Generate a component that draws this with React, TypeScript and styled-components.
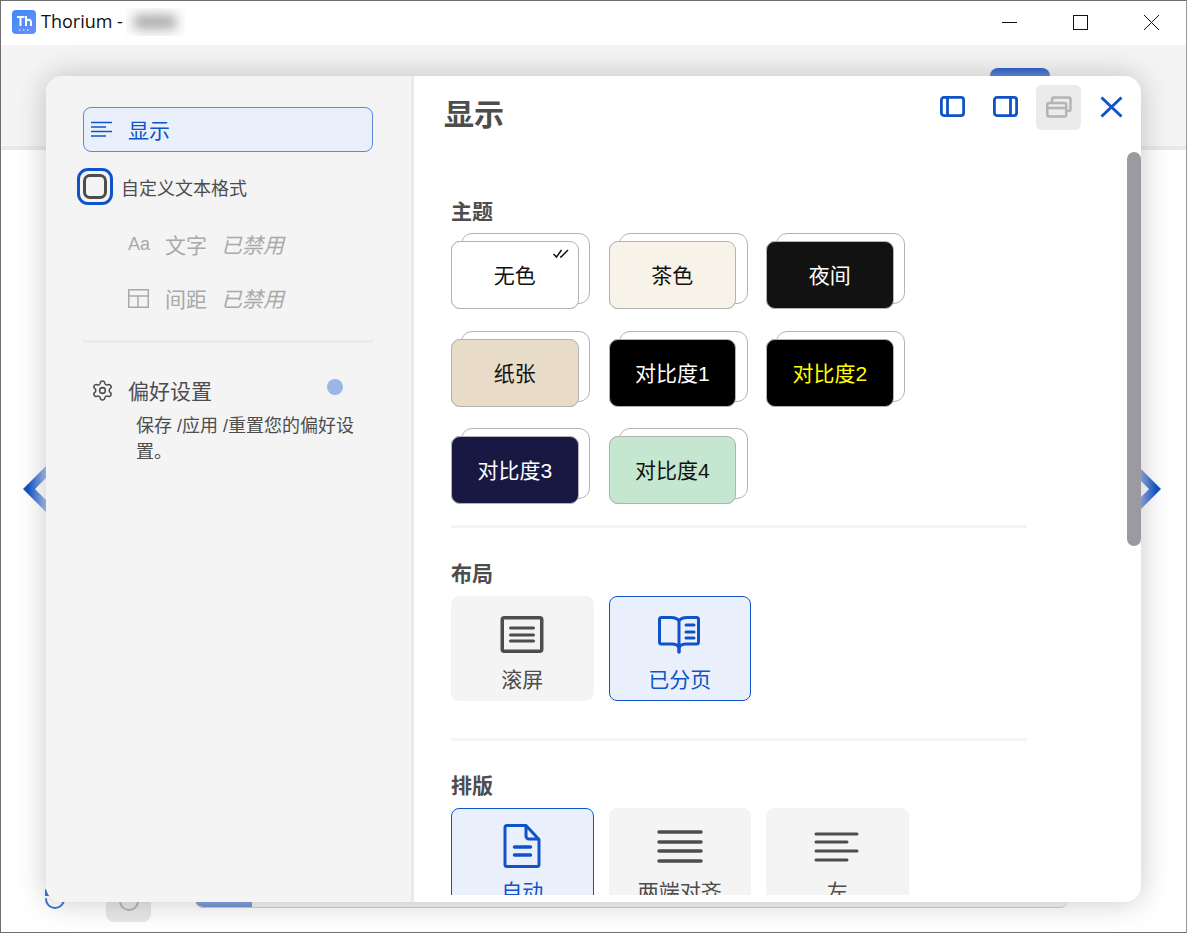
import React from "react";
import styled, { createGlobalStyle } from "styled-components";
import { RotateCcw, Settings } from "lucide-react";

const BLUE = "#1053c8";
const GREY = "#4d4d4d";
const MUTED = "#a9a9a9";
const FONT = '"Liberation Sans", "Noto Sans CJK SC", sans-serif';

const GlobalStyle = createGlobalStyle`
  html, body { margin: 0; padding: 0; background: #fff; }
  * { box-sizing: border-box; }
`;

const Window = styled.div`
  position: relative;
  width: 1187px;
  height: 933px;
  border: 1px solid #6e6e6e;
  border-right-color: #9a9a9a;
  display: flex;
  flex-direction: column;
  overflow: hidden;
  background: #fff;
  font-family: ${FONT};
`;

const TitleBar = styled.div`
  height: 44px;
  flex: none;
  display: flex;
  align-items: center;
  padding: 0 0 2px 11px;
  background: #fff;
`;

const AppIcon = styled.svg`
  width: 24px;
  height: 24px;
  margin-right: 5px;
`;

const TitleText = styled.span`
  margin-top: -2px;
  font-family: "Open Sans", sans-serif;
  font-size: 18px;
  color: #111;
`;

const BlurBox = styled.span`
  width: 59px;
  height: 28px;
  margin-left: 3px;
  display: flex;
  align-items: center;
  justify-content: center;
  background: #fdfdfd;
  overflow: hidden;
`;

const BlurBlob = styled.span`
  width: 42px;
  height: 14px;
  background: #a8a8a8;
  filter: blur(6px);
`;

const WinControls = styled.div`
  margin-left: auto;
  padding-top: 2px;
  display: flex;
  align-items: center;
  height: 100%;
`;

const WinButton = styled.svg`
  width: 71px;
  height: 16px;
`;

const Toolbar = styled.div`
  height: 105px;
  flex: none;
  display: flex;
  justify-content: flex-end;
  padding: 23px 136px 0 0;
  background: #f4f4f4;
  border-bottom: 4px solid #e9e9e9;
`;

const ToolTab = styled.div`
  width: 60px;
  height: 12px;
  border-radius: 8px 8px 0 0;
  background: linear-gradient(#2c64c9, #7f9fdc);
`;

const Reader = styled.div`
  flex: 1;
`;

const Footer = styled.div`
  height: 52px;
  flex: none;
  display: flex;
  align-items: center;
  padding: 0 118px 10px 42px;
`;

const FooterIcon = styled.span`
  width: 24px;
  height: 24px;
  margin-top: -5px;
  color: #3f74d4;
`;

const FooterButton = styled.div`
  width: 45px;
  height: 42px;
  margin-left: 39px;
  border-radius: 8px;
  background: #e8e8e8;
  display: flex;
  align-items: center;
  justify-content: center;
  color: #b5b5b5;
`;

const Progress = styled.div`
  flex: 1;
  height: 14px;
  margin-left: 44px;
  border-radius: 0 0 8px 8px;
  background: #f4f4f4;
  border-bottom: 1px solid #cfcfcf;
  overflow: hidden;
`;

const ProgressFill = styled.div`
  height: 100%;
  border-radius: 0 0 0 8px;
  background: linear-gradient(#a9bfe9, #6f93d8);
`;

const PageArrow = styled.svg<{ $side: "left" | "right" }>`
  position: absolute;
  top: 465px;
  ${({ $side }) => ($side === "left" ? "left: 22px;" : "left: 1137px;")}
  width: 23px;
  height: 46px;
`;

const Modal = styled.div`
  position: absolute;
  left: 45px;
  top: 75px;
  width: 1095px;
  height: 826px;
  display: flex;
  border-radius: 16px;
  overflow: hidden;
  background: #fff;
  box-shadow: 0 0 30px rgba(0, 0, 0, 0.22);
  color: ${GREY};
`;

const Sidebar = styled.div`
  width: 368px;
  flex: none;
  padding: 31px 38px 0 37px;
  background: #f4f4f4;
  border-right: 3px solid #e9e9e9;
`;

const NavItem = styled.div`
  height: 45px;
  display: flex;
  align-items: center;
  gap: 16px;
  padding: 0 0 2px 7px;
  border: 1px solid #5f8ad8;
  border-radius: 8px;
  background: #eaf0fb;
  color: ${BLUE};
  font-size: 21px;
`;

const CheckRow = styled.div`
  height: 37px;
  margin: 16px 0 12px -6px;
  display: flex;
  align-items: center;
  gap: 8px;
  font-size: 18px;
`;

const CheckRing = styled.span`
  width: 36px;
  height: 37px;
  padding: 3px;
  border: 3px solid ${BLUE};
  border-radius: 11px;
`;

const CheckBox = styled.span`
  display: block;
  width: 100%;
  height: 100%;
  border: 3px solid ${GREY};
  border-radius: 7px;
`;

const DisabledRow = styled.div`
  height: 54px;
  display: flex;
  align-items: center;
  padding-left: 45px;
  font-size: 21px;
  color: ${MUTED};
`;

const DisabledIcon = styled.span`
  width: 21px;
  margin-right: 16px;
  display: flex;
  font-size: 18px;
  font-family: "Liberation Sans", sans-serif;
`;

const DisabledNote = styled.em`
  margin-left: 14px;
  font-style: italic;
`;

const SideDivider = styled.div`
  height: 3px;
  margin-top: 15px;
  background: #ebebeb;
`;

const PrefHead = styled.div`
  position: relative;
  height: 28px;
  margin-top: 33px;
  padding-left: 8px;
  display: flex;
  align-items: center;
  gap: 14px;
  font-size: 21px;
`;

const PrefDot = styled.span`
  position: absolute;
  left: 244px;
  top: 3px;
  width: 16px;
  height: 16px;
  border-radius: 50%;
  background: #9ab5e6;
`;

const PrefText = styled.p`
  margin: 9px 0 0;
  padding-left: 53px;
  font-size: 18px;
  line-height: 26px;
`;

const Content = styled.div`
  position: relative;
  flex: 1;
  height: 819px;
  overflow: hidden;
`;

const ContentHead = styled.div`
  height: 76px;
  display: flex;
  align-items: flex-start;
  padding: 9px 7px 0 30px;
`;

const PageTitle = styled.h1`
  margin: 0;
  padding-top: 10px;
  font-size: 30px;
  line-height: 40px;
  font-weight: 700;
`;

const HeadActions = styled.div`
  margin-left: auto;
  display: flex;
  align-items: center;
  height: 45px;
`;

const HeadIcon = styled.span<{ $active?: boolean }>`
  width: 45px;
  height: 45px;
  margin-left: 8px;
  padding-bottom: 2px;
  display: flex;
  align-items: center;
  justify-content: center;
  border-radius: 6px;
  background: ${({ $active }) => ($active ? "#ebebeb" : "transparent")};
  color: ${({ $active }) => ($active ? "#b4b4b4" : BLUE)};
`;

const Scrollbar = styled.div`
  position: absolute;
  right: 0;
  top: 76px;
  width: 14px;
  height: 394px;
  border-radius: 7px;
  background: #9c9aa0;
`;

const Section = styled.section`
  margin: 0 114px 0 37px;
  padding-top: 48px;
`;

const SectionLabel = styled.h2<{ $gap: number }>`
  margin: 0 0 ${({ $gap }) => $gap}px;
  font-size: 21px;
  line-height: 24px;
  font-weight: 700;
`;

const ThemeGrid = styled.div`
  display: grid;
  grid-template-columns: repeat(3, 127.5px);
  grid-auto-rows: 68px;
  column-gap: 30px;
  row-gap: 29.5px;
`;

const ThemeCard = styled.div<{ $bg: string; $fg: string }>`
  position: relative;
  z-index: 0;
  display: flex;
  align-items: center;
  justify-content: center;
  padding-bottom: 2px;
  border: 1px solid #b3b3b3;
  border-radius: 9px;
  background: ${({ $bg }) => $bg};
  color: ${({ $fg }) => $fg};
  font-size: 21px;

  &::before {
    content: "";
    position: absolute;
    z-index: -2;
    left: 9px;
    top: -9px;
    width: 127px;
    height: 69px;
    border: 1px solid #b3b3b3;
    border-radius: 11px;
    background: #fff;
  }

  &::after {
    content: "";
    position: absolute;
    z-index: -1;
    inset: -1px;
    border-radius: 9px;
    background: ${({ $bg }) => $bg};
    border: 1px solid #b3b3b3;
  }
`;

const CheckMark = styled.svg`
  position: absolute;
  right: 8px;
  top: 7px;
  width: 17px;
  height: 10px;
`;

const Divider = styled.div<{ $top: number; $bottom: number }>`
  height: 3px;
  margin: ${({ $top, $bottom }) => `${$top}px 0 ${$bottom}px`};
  background: #f4f4f4;
`;

const OptionRow = styled.div`
  display: flex;
  gap: 15px;
`;

const OptionCard = styled.div<{ $selected?: boolean }>`
  width: 142.5px;
  height: 105px;
  flex: none;
  display: flex;
  flex-direction: column;
  align-items: center;
  border-radius: 8px;
  border: 1px solid ${({ $selected }) => ($selected ? BLUE : "#f4f4f4")};
  background: ${({ $selected }) => ($selected ? "#eaf0fb" : "#f4f4f4")};
  color: ${({ $selected }) => ($selected ? BLUE : GREY)};
  font-size: 21px;
`;

const OptionIcon = styled.svg`
  display: block;
  width: 46px;
  height: 46px;
  margin-top: 15px;
  margin-bottom: 5px;
`;

const themes = [
  { name: "无色", bg: "#ffffff", fg: "#111", checked: true },
  { name: "茶色", bg: "#f8f3e8", fg: "#111" },
  { name: "夜间", bg: "#121212", fg: "#fff" },
  { name: "纸张", bg: "#e8dcc8", fg: "#111" },
  { name: "对比度1", bg: "#000000", fg: "#fff" },
  { name: "对比度2", bg: "#000000", fg: "#ffff00" },
  { name: "对比度3", bg: "#181842", fg: "#fff" },
  { name: "对比度4", bg: "#c5e7cf", fg: "#111" },
];

const ScrollIcon = () => (
  <OptionIcon viewBox="0 0 46 46" fill="none" stroke="currentColor">
    <rect x="3.25" y="5.75" width="39.5" height="33.5" rx="2" strokeWidth="3.5" />
    <path d="M11.5 16h23M11.5 23h23M11.5 29h23" strokeWidth="3" strokeLinecap="round" />
  </OptionIcon>
);

const BookIcon = () => (
  <OptionIcon viewBox="0 0 46 46" fill="none" stroke="currentColor" strokeWidth="3">
    <path
      d="M22 9c-2-3-5-3.500-8-3.500H4.500a2 2 0 0 0-2 2V30a2 2 0 0 0 2 2H15c3 0 5.500 1 7 3 1.500-2 4-3 7-3h10.500a2 2 0 0 0 2-2V7.500a2 2 0 0 0-2-2H30c-3 0-6 .5-8 3.500v26"
      strokeLinejoin="round"
    />
    <path d="M29 13h8M29 20h8M29 26h8" strokeLinecap="round" />
    <path d="M22 35v5" strokeWidth="3.5" strokeLinecap="round" />
  </OptionIcon>
);

const FileIcon = () => (
  <OptionIcon viewBox="0 0 46 46" fill="none" stroke="currentColor" strokeWidth="3">
    <path d="M8 1.500h19l13 14v25a2 2 0 0 1-2 2H8a2 2 0 0 1-2-2V3.500a2 2 0 0 1 2-2z" strokeLinejoin="round" />
    <path d="M27 1.500V12a3 3 0 0 0 3 3h10" strokeLinejoin="round" />
    <path d="M15.500 23h16M15.500 31h16" strokeWidth="3.5" strokeLinecap="round" />
  </OptionIcon>
);

const JustifyIcon = () => (
  <OptionIcon viewBox="0 0 46 46" fill="none" stroke="currentColor" strokeWidth="3.5" strokeLinecap="round">
    <path d="M2 8h42M2 18h42M2 27h42M2 37h42" />
  </OptionIcon>
);

const AlignLeftIcon = () => (
  <OptionIcon viewBox="0 0 46 46" fill="none" stroke="currentColor" strokeWidth="3" strokeLinecap="round">
    <path d="M2 10h41M2 18h31M2 27h41M2 36h31" />
  </OptionIcon>
);

const PanelIcon = ({ divider }: { divider: number }) => (
  <svg width="25" height="21" viewBox="0 0 25 21" fill="none" stroke="currentColor" strokeWidth="2.8">
    <rect x="1.4" y="1.4" width="22.2" height="18.2" rx="2.5" />
    <path d={`M${divider} 2v17`} />
  </svg>
);

export default function App() {
  return (
    <Window>
      <GlobalStyle />
      <TitleBar>
        <AppIcon viewBox="0 0 24 24">
          <defs>
            <linearGradient id="app" x1="0" y1="0" x2="1" y2="1">
              <stop offset="0" stopColor="#3f8af5" />
              <stop offset="1" stopColor="#6a8ff7" />
            </linearGradient>
          </defs>
          <rect width="24" height="24" rx="4" fill="url(#app)" />
          <path d="M5 7h7.500M8.500 7v9M14 6v10M14 11c2-2 5-1.500 5 1v4" fill="none" stroke="#fff" strokeWidth="2" />
          <path d="M7 20h1.500M11 20h1.500M15 20h1.500" stroke="#fff" strokeWidth="1" />
        </AppIcon>
        <TitleText>Thorium -</TitleText>
        <BlurBox>
          <BlurBlob />
        </BlurBox>
        <WinControls>
          <WinButton viewBox="0 0 71 16" fill="none" stroke="#111" strokeWidth="1">
            <path d="M29 7.500h15" />
          </WinButton>
          <WinButton viewBox="0 0 71 16" fill="none" stroke="#111" strokeWidth="1">
            <rect x="29.500" y="0.500" width="14" height="14" />
          </WinButton>
          <WinButton viewBox="0 0 71 16" fill="none" stroke="#111" strokeWidth="1">
            <path d="M29 0l15 15M44 0L29 15" />
          </WinButton>
        </WinControls>
      </TitleBar>
      <Toolbar>
        <ToolTab />
      </Toolbar>
      <Reader />
      <Footer>
        <FooterIcon>
          <RotateCcw size={24} />
        </FooterIcon>
        <FooterButton>
          <RotateCcw size={24} />
        </FooterButton>
        <Progress>
          <ProgressFill style={{ width: `${(57 / 872) * 100}%` }} />
        </Progress>
      </Footer>

      <PageArrow $side="left" viewBox="0 0 23 46">
        <defs>
          <linearGradient id="arrowL" x1="0" x2="1" y1="0" y2="0">
            <stop offset="0.2" stopColor={BLUE} />
            <stop offset="1" stopColor="#a9c0ec" />
          </linearGradient>
        </defs>
        <path d="M0 23L23 0v12L12 23l11 11v12z" fill="url(#arrowL)" />
      </PageArrow>
      <PageArrow $side="right" viewBox="0 0 23 46">
        <defs>
          <linearGradient id="arrowR" x1="1" x2="0" y1="0" y2="0">
            <stop offset="0.2" stopColor={BLUE} />
            <stop offset="1" stopColor="#a9c0ec" />
          </linearGradient>
        </defs>
        <path d="M23 23L0 0v12l11 11L0 34v12z" fill="url(#arrowR)" />
      </PageArrow>

      <Modal>
        <Sidebar>
          <NavItem>
            <svg width="21" height="16" viewBox="0 0 21 16" fill="none" stroke="currentColor" strokeWidth="1.5">
              <path d="M0 1.500h21M0 6h15M0 10.500h21M0 15h15" />
            </svg>
            显示
          </NavItem>
          <CheckRow>
            <CheckRing>
              <CheckBox />
            </CheckRing>
            自定义文本格式
          </CheckRow>
          <DisabledRow>
            <DisabledIcon>Aa</DisabledIcon>
            文字
            <DisabledNote>已禁用</DisabledNote>
          </DisabledRow>
          <DisabledRow>
            <DisabledIcon>
              <svg width="21" height="19" viewBox="0 0 21 19" fill="none" stroke="currentColor" strokeWidth="1.5">
                <rect x="0.75" y="0.75" width="19.5" height="17.5" />
                <path d="M1 7h19M10 7v11" />
              </svg>
            </DisabledIcon>
            间距
            <DisabledNote>已禁用</DisabledNote>
          </DisabledRow>
          <SideDivider />
          <PrefHead>
            <Settings size={23} strokeWidth={1.6} />
            偏好设置
            <PrefDot />
          </PrefHead>
          <PrefText>保存 /应用 /重置您的偏好设置。</PrefText>
        </Sidebar>
        <Content>
          <ContentHead>
            <PageTitle>显示</PageTitle>
            <HeadActions>
              <HeadIcon>
                <PanelIcon divider={7.5} />
              </HeadIcon>
              <HeadIcon>
                <PanelIcon divider={17.5} />
              </HeadIcon>
              <HeadIcon $active>
                <svg width="26" height="22" viewBox="0 0 26 22" fill="none" stroke="currentColor" strokeWidth="2.5">
                  <rect x="1.25" y="7" width="19" height="13.5" rx="2" />
                  <path d="M1.5 12H20" />
                  <path d="M6 7V3.500a2 2 0 0 1 2-2h14.500a2 2 0 0 1 2 2V13a2 2 0 0 1-2 2h-2" />
                </svg>
              </HeadIcon>
              <HeadIcon>
                <svg width="23" height="22" viewBox="0 0 23 22" fill="none" stroke="currentColor" strokeWidth="3">
                  <path d="M1.500 1.500l20 19M21.500 1.500l-20 19" />
                </svg>
              </HeadIcon>
            </HeadActions>
          </ContentHead>
          <Scrollbar />
          <Section>
            <SectionLabel $gap={17}>主题</SectionLabel>
            <ThemeGrid>
              {themes.map((t) => (
                <ThemeCard key={t.name} $bg={t.bg} $fg={t.fg}>
                  {t.name}
                  {t.checked && (
                    <CheckMark viewBox="0 0 17 10" fill="none" stroke="#111" strokeWidth="1.5">
                      <path d="M0.500 5l3 3 5-7M7 8l1 0 7-7" />
                    </CheckMark>
                  )}
                </ThemeCard>
              ))}
            </ThemeGrid>
            <Divider $top={21} $bottom={34} />
            <SectionLabel $gap={10}>布局</SectionLabel>
            <OptionRow>
              <OptionCard>
                <ScrollIcon />
                滚屏
              </OptionCard>
              <OptionCard $selected>
                <BookIcon />
                已分页
              </OptionCard>
            </OptionRow>
            <Divider $top={37} $bottom={33} />
            <SectionLabel $gap={10}>排版</SectionLabel>
            <OptionRow>
              <OptionCard $selected>
                <FileIcon />
                自动
              </OptionCard>
              <OptionCard>
                <JustifyIcon />
                两端对齐
              </OptionCard>
              <OptionCard>
                <AlignLeftIcon />
                左
              </OptionCard>
            </OptionRow>
          </Section>
        </Content>
      </Modal>
    </Window>
  );
}
